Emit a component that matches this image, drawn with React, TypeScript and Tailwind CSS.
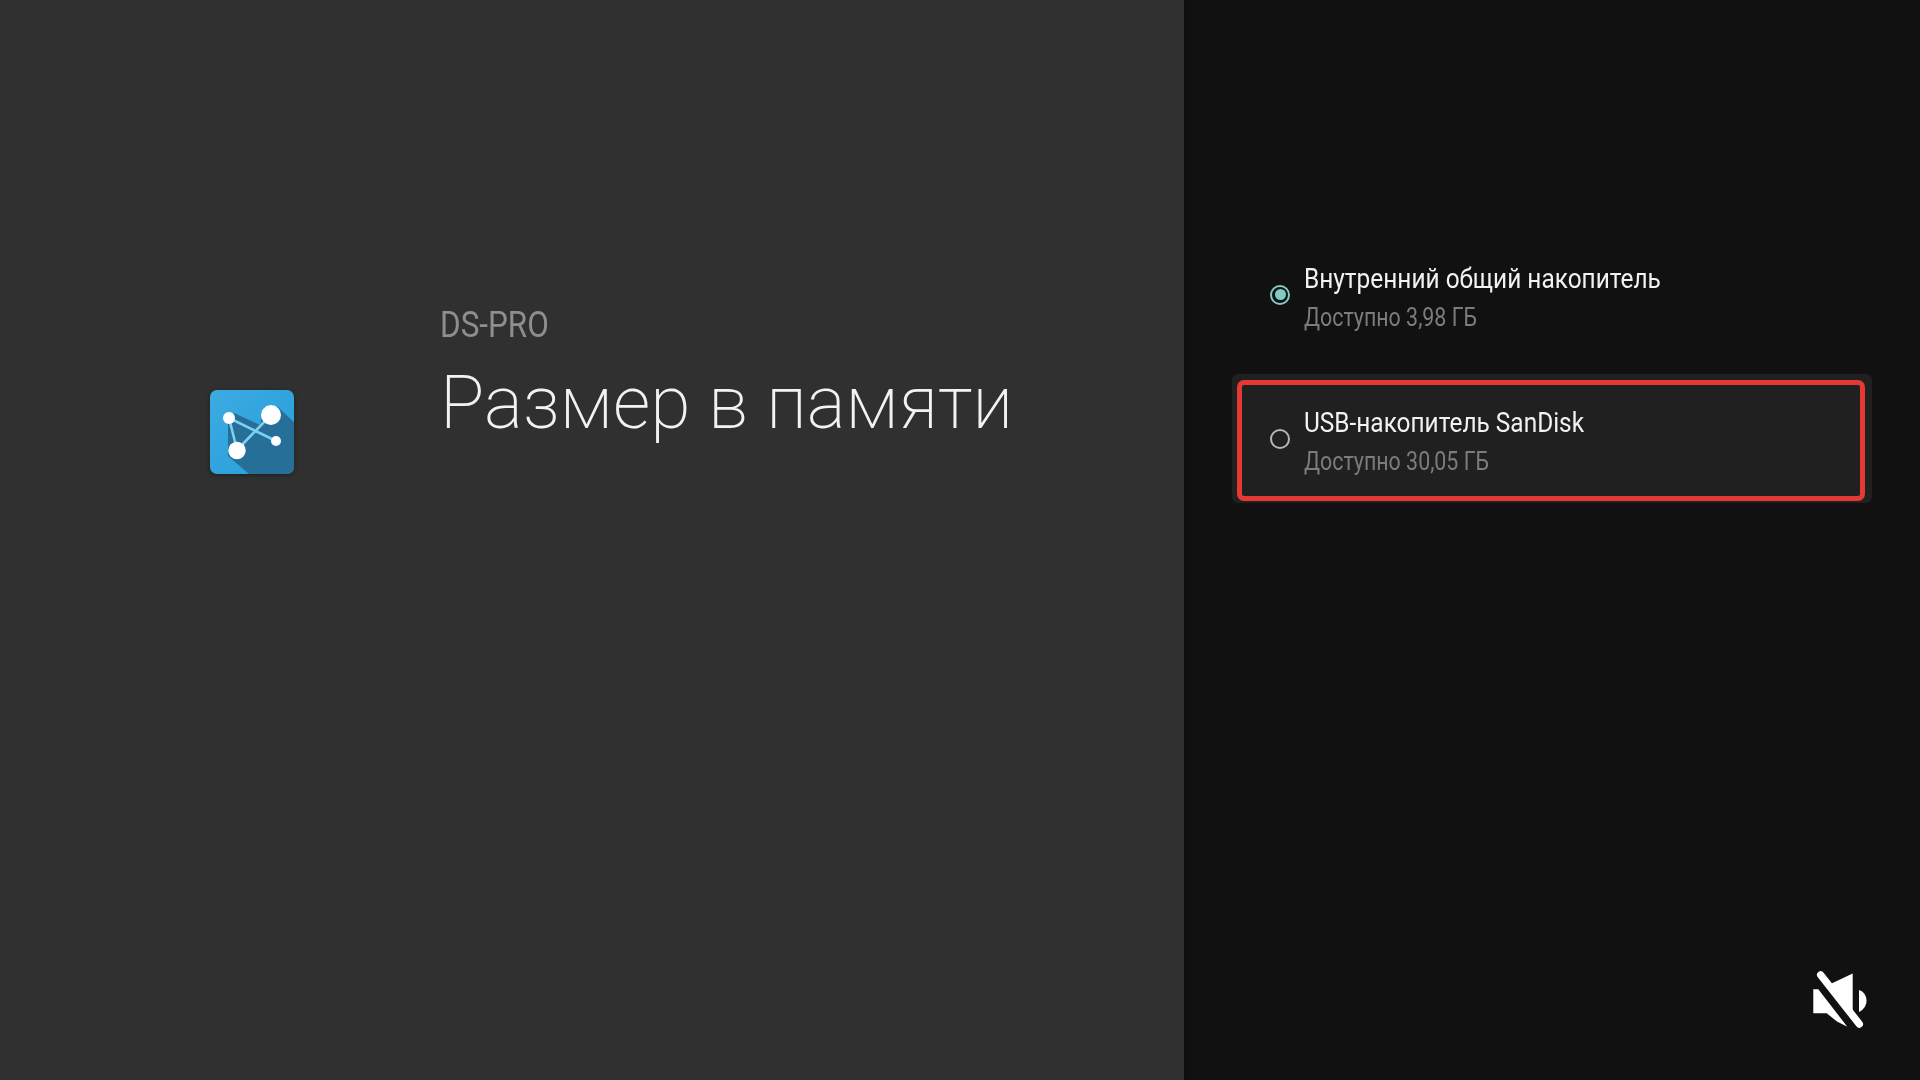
const condensed = 'origin-left whitespace-nowrap';

function AppIcon() {
  return (
    <svg width="84" height="84" viewBox="0 0 84 84" className="shrink-0 drop-shadow-[0_1px_2px_rgba(0,0,0,0.4)]">
      <defs>
        <linearGradient id="tile" x1="0" y1="0" x2="1" y2="1">
          <stop offset="0" stopColor="#3cabe2" />
          <stop offset="1" stopColor="#279ed9" />
        </linearGradient>
        <clipPath id="tile-clip">
          <rect width="84" height="84" rx="7" />
        </clipPath>
      </defs>
      <rect width="84" height="84" rx="7" fill="url(#tile)" />
      <g clipPath="url(#tile-clip)">
        <path d="M24 23 L50 35 L54 17 L68 17 L90 38 L90 90 L46 90 L18 66 L18 34 Z" fill="#266f98" />
      </g>
      <g stroke="#7ed0f0" strokeWidth="2.6">
        <path d="M19 28 L66 51" />
        <path d="M19 28 L27 60" />
        <path d="M61 25 L27 60" />
      </g>
      <circle cx="61" cy="25" r="10" fill="#fff" />
      <circle cx="19" cy="28" r="6" fill="#fff" />
      <circle cx="27" cy="60.5" r="8.7" fill="#fff" />
      <circle cx="66" cy="51" r="5" fill="#fff" />
    </svg>
  );
}

function MuteIcon() {
  return (
    <svg width="60" height="60" viewBox="20 20 60 60" className="shrink-0">
      <path d="M41.5 33.5 L62.7 23.5 L62.7 63.5 Z" fill="#fff" />
      <path d="M23.3 39.3 L28.3 39.3 L57.3 76.7 L47 71.5 L36.7 63.3 L23.3 63.3 Z" fill="#fff" />
      <path d="M69 40 C78.5 43 79.5 57 69 62 Z" fill="#fff" />
      <path d="M30.7 25 L69.3 74" stroke="#fff" strokeWidth="7.4" strokeLinecap="round" />
    </svg>
  );
}

function StorageRow({ title, sub, selected }: { title: string; sub: string; selected?: boolean }) {
  return (
    <div className="flex h-[111px] items-center">
      <div className="mb-[4px] flex w-[62px] shrink-0 justify-end pr-[14px]">
        {selected ? (
          <div className="flex h-5 w-5 items-center justify-center rounded-full border-2 border-[#80cbc4]">
            <div className="h-[11px] w-[11px] rounded-full bg-[#80cbc4]" />
          </div>
        ) : (
          <div className="h-5 w-5 rounded-full border-2 border-[#b5b5b5]" />
        )}
      </div>
      <div className="min-w-0 pt-[3px]">
        <div className={`${condensed} scale-x-[0.872] text-[28px] leading-[36px] text-[#f2f2f2]`}>{title}</div>
        <div className={`${condensed} mt-[3px] scale-x-[0.855] text-[25px] leading-[36px] text-[#7c7c7c]`}>{sub}</div>
      </div>
    </div>
  );
}

export default function App() {
  return (
    <div className="flex h-[1080px] w-[1920px] overflow-hidden bg-[#111111] font-['Roboto',sans-serif]">
      <div className="flex w-[1184px] shrink-0 items-start bg-[#303030] pl-[210px] pt-[390px] shadow-[2px_0_6px_rgba(0,0,0,0.35)]">
        <AppIcon />
        <div className="ml-[146px] -mt-[89px]">
          <div className={`${condensed} scale-x-[0.85] text-[37px] leading-[48px] text-[#8e8e8e]`}>DS-PRO</div>
          <div className="mt-[10px] text-[73.2px] font-extralight leading-[88px] text-[#f2f2f2]">Размер в памяти</div>
        </div>
      </div>
      <div className="relative flex-1 pl-[48px] pr-[48px] pt-[241px]">
        <div className="w-[640px]">
          <div className="mx-[5px] px-[5px]">
            <StorageRow title="Внутренний общий накопитель" sub="Доступно 3,98 ГБ" selected />
          </div>
          <div className="mt-[22px] rounded-[6px] bg-[#202020] pb-[2px] pl-[5px] pr-[7px] pt-[6px]">
            <div className="rounded-[7px] border-[5px] border-[#e53935]">
              <StorageRow title="USB-накопитель SanDisk" sub="Доступно 30,05 ГБ" />
            </div>
          </div>
        </div>
        <div className="absolute bottom-[50px] right-[50px]">
          <MuteIcon />
        </div>
      </div>
    </div>
  );
}
